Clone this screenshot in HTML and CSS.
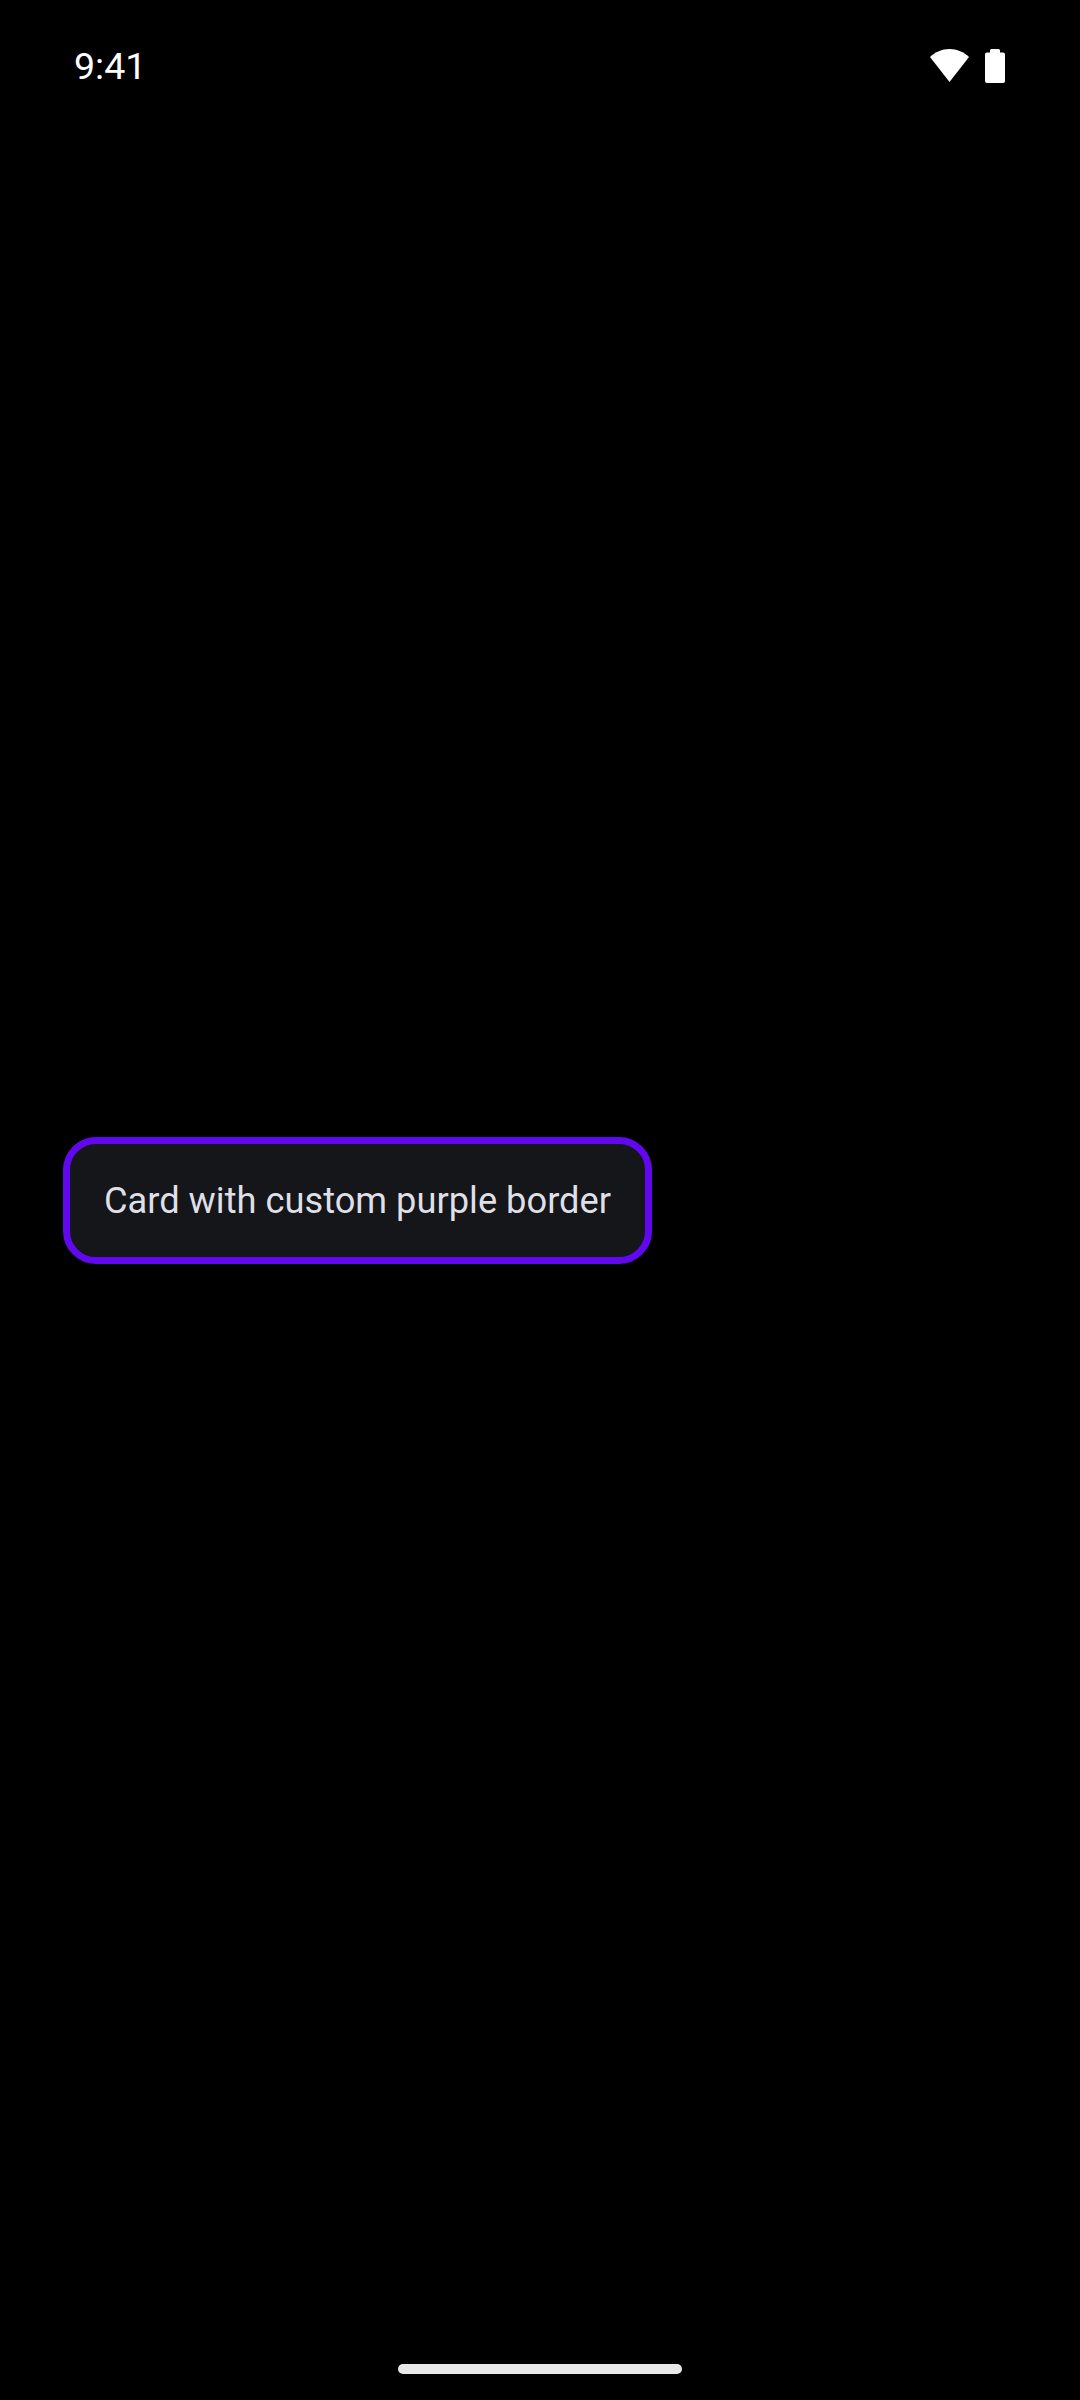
FILE: index.html
```html
<!DOCTYPE html>
<html lang="en">

<head>
    <meta charset="UTF-8">
    <meta name="viewport" content="width=device-width, initial-scale=1.0">
    <title>Card</title>
    <link rel="stylesheet" href="styles.css">
</head>

<body>
    <div class="screen">
        <header class="status-bar">
            <span class="time">9:41</span>
            <div class="status-icons">
                <svg class="wifi" viewBox="0 0 39 33" aria-hidden="true">
                    <path fill="#ffffff" d="M0 8C5 3 12 0 19.500 0S34 3 39 8L19.500 33Z" />
                </svg>
                <svg class="battery" viewBox="0 0 20 34" aria-hidden="true">
                    <path fill="#ffffff" d="M5 3.500V1.500Q5 0 6.500 0H13.500Q15 0 15 1.500V3.500H18Q20 3.500 20 5.500V32Q20 34 18 34H2Q0 34 0 32V5.500Q0 3.500 2 3.500Z" />
                </svg>
            </div>
        </header>

        <main class="content">
            <div class="card">
                <p class="card-text">Card with custom purple border</p>
            </div>
        </main>

        <footer class="nav-bar">
            <div class="nav-handle"></div>
        </footer>
    </div>
</body>

</html>
```

FILE: styles.css
```css
body {
    margin: 0;
    background-color: #000000;
    font-family: Roboto, "Liberation Sans", sans-serif;
}

.screen {
    display: flex;
    flex-direction: column;
    width: 1080px;
    height: 2400px;
}

.status-bar {
    display: flex;
    justify-content: space-between;
    align-items: flex-start;
    height: 132px;
    box-sizing: border-box;
    padding: 44px 75px 0 74px;
}

.time {
    color: #ffffff;
    font-size: 37.500px;
    line-height: 45px;
}

.status-icons {
    display: flex;
    align-items: flex-start;
    gap: 16px;
    margin-top: 5px;
}

.wifi {
    width: 39px;
    height: 33px;
}

.battery {
    width: 20px;
    height: 34px;
}

.content {
    flex: 1;
    display: flex;
    align-items: center;
    padding: 0 63px;
}

.card {
    box-sizing: border-box;
    width: 589px;
    height: 127px;
    display: flex;
    align-items: center;
    justify-content: center;
    background-color: #14161a;
    border: 7px solid #6208ee;
    border-radius: 33px;
}

.card-text {
    margin: 0;
    color: #dfdfe5;
    font-size: 36.250px;
    white-space: nowrap;
}

.nav-bar {
    display: flex;
    justify-content: center;
    align-items: flex-end;
    height: 132px;
    box-sizing: border-box;
    padding-bottom: 26px;
}

.nav-handle {
    width: 284px;
    height: 10px;
    border-radius: 5px;
    background-color: #e8e8e8;
}
```
